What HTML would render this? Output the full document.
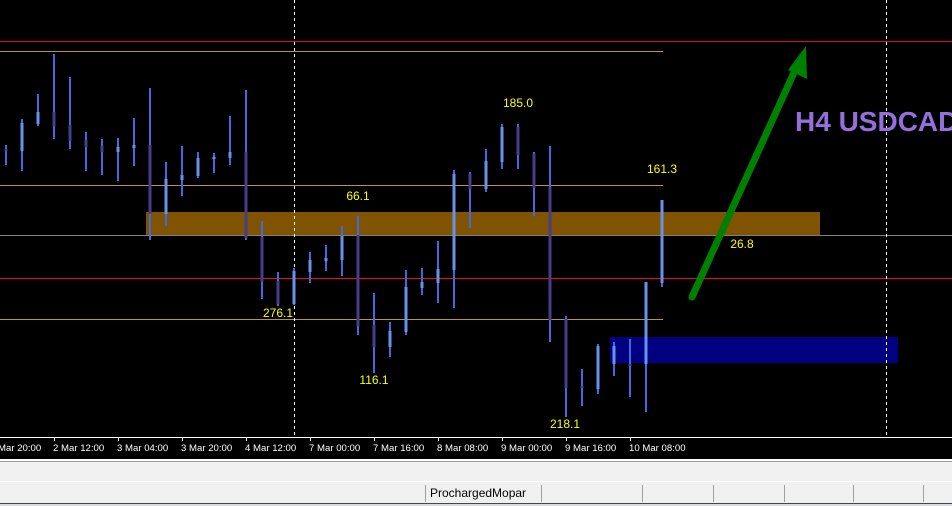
<!DOCTYPE html>
<html><head><meta charset="utf-8"><style>
html,body{margin:0;padding:0;width:952px;height:506px;overflow:hidden;background:#000;font-family:"Liberation Sans",sans-serif}
svg{display:block}
</style></head><body>
<svg width="952" height="506" viewBox="0 0 952 506" xmlns="http://www.w3.org/2000/svg">
<rect width="952" height="459" fill="#000"/>
<line x1="0" y1="41.5" x2="952" y2="41.5" stroke="#e01010" stroke-width="1"/>
<line x1="0" y1="51.5" x2="663" y2="51.5" stroke="#c09040" stroke-width="1"/>
<line x1="0" y1="185.5" x2="663" y2="185.5" stroke="#c09040" stroke-width="1"/>
<line x1="0" y1="319.5" x2="663" y2="319.5" stroke="#c09040" stroke-width="1"/>
<rect x="146" y="212" width="674" height="23" fill="#7f5300"/>
<line x1="0" y1="235.5" x2="952" y2="235.5" stroke="#808080" stroke-width="1"/>
<line x1="0" y1="278.5" x2="952" y2="278.5" stroke="#f01010" stroke-width="1"/>
<rect x="610" y="337" width="288" height="26" fill="#000080"/>
<line x1="294.5" y1="0" x2="294.5" y2="437" stroke="#fff" stroke-width="1" stroke-dasharray="3,3"/>
<line x1="886.5" y1="0" x2="886.5" y2="437" stroke="#fff" stroke-width="1" stroke-dasharray="3,3"/>
<g stroke-linecap="butt">
<g stroke="#4169e1" stroke-width="2">
<line x1="6" y1="145" x2="6" y2="165"/><line x1="22" y1="119" x2="22" y2="171"/><line x1="38" y1="94" x2="38" y2="126"/><line x1="54" y1="54" x2="54" y2="139"/><line x1="70" y1="77" x2="70" y2="149"/><line x1="86" y1="132" x2="86" y2="171"/><line x1="102" y1="139" x2="102" y2="175"/><line x1="118" y1="138" x2="118" y2="181"/><line x1="134" y1="118" x2="134" y2="166"/><line x1="150" y1="88" x2="150" y2="240"/><line x1="166" y1="162" x2="166" y2="226"/><line x1="182" y1="146" x2="182" y2="196"/><line x1="198" y1="152" x2="198" y2="178"/><line x1="214" y1="153" x2="214" y2="173"/><line x1="230" y1="116" x2="230" y2="165"/><line x1="246" y1="90" x2="246" y2="240"/><line x1="262" y1="221" x2="262" y2="299"/><line x1="278" y1="272" x2="278" y2="306"/><line x1="294" y1="268" x2="294" y2="305"/><line x1="310" y1="252" x2="310" y2="283"/><line x1="326" y1="245" x2="326" y2="271"/><line x1="342" y1="226" x2="342" y2="276"/><line x1="358" y1="216" x2="358" y2="335"/><line x1="374" y1="293" x2="374" y2="373"/><line x1="390" y1="322" x2="390" y2="357"/><line x1="406" y1="270" x2="406" y2="335"/><line x1="422" y1="268" x2="422" y2="295"/><line x1="438" y1="241" x2="438" y2="303"/><line x1="454" y1="170" x2="454" y2="308"/><line x1="470" y1="172" x2="470" y2="228"/><line x1="486" y1="149" x2="486" y2="192"/><line x1="502" y1="124" x2="502" y2="169"/><line x1="518" y1="124" x2="518" y2="169"/><line x1="534" y1="152" x2="534" y2="216"/><line x1="550" y1="146" x2="550" y2="342"/><line x1="566" y1="316" x2="566" y2="417"/><line x1="582" y1="369" x2="582" y2="406"/><line x1="598" y1="344" x2="598" y2="394"/><line x1="614" y1="342" x2="614" y2="376"/><line x1="630" y1="339" x2="630" y2="397"/><line x1="646" y1="282" x2="646" y2="412"/><line x1="662" y1="200" x2="662" y2="287"/>
</g>
<g stroke="#6495ed" stroke-width="3">
<line x1="22" y1="123" x2="22" y2="151"/><line x1="38" y1="112" x2="38" y2="124"/><line x1="118" y1="147" x2="118" y2="152"/><line x1="134" y1="145" x2="134" y2="148"/><line x1="166" y1="179" x2="166" y2="214"/><line x1="182" y1="175" x2="182" y2="180"/><line x1="198" y1="158" x2="198" y2="176"/><line x1="214" y1="157" x2="214" y2="159"/><line x1="230" y1="152" x2="230" y2="158"/><line x1="294" y1="271" x2="294" y2="304"/><line x1="310" y1="260" x2="310" y2="272"/><line x1="326" y1="258" x2="326" y2="261"/><line x1="342" y1="236" x2="342" y2="260"/><line x1="390" y1="331" x2="390" y2="347"/><line x1="406" y1="287" x2="406" y2="332"/><line x1="422" y1="282" x2="422" y2="288"/><line x1="438" y1="269" x2="438" y2="283"/><line x1="454" y1="174" x2="454" y2="270"/><line x1="486" y1="161" x2="486" y2="189"/><line x1="502" y1="127" x2="502" y2="162"/><line x1="598" y1="346" x2="598" y2="389"/><line x1="614" y1="346" x2="614" y2="364"/><line x1="646" y1="282" x2="646" y2="364"/><line x1="662" y1="200" x2="662" y2="283"/>
</g>
<g stroke="#483d8b" stroke-width="3">
<line x1="6" y1="149" x2="6" y2="151"/><line x1="54" y1="112" x2="54" y2="126"/><line x1="70" y1="125" x2="70" y2="141"/><line x1="86" y1="140" x2="86" y2="147"/><line x1="102" y1="146" x2="102" y2="152"/><line x1="150" y1="145" x2="150" y2="214"/><line x1="246" y1="152" x2="246" y2="238"/><line x1="262" y1="237" x2="262" y2="282"/><line x1="278" y1="281" x2="278" y2="304"/><line x1="358" y1="235" x2="358" y2="326"/><line x1="374" y1="325" x2="374" y2="347"/><line x1="470" y1="174" x2="470" y2="189"/><line x1="518" y1="127" x2="518" y2="155"/><line x1="534" y1="154" x2="534" y2="188"/><line x1="550" y1="187" x2="550" y2="320"/><line x1="566" y1="319" x2="566" y2="388"/><line x1="582" y1="386" x2="582" y2="388"/><line x1="630" y1="364" x2="630" y2="366"/>
</g>
</g>
<line x1="692" y1="297" x2="797" y2="66" stroke="#008000" stroke-width="7" stroke-linecap="round"/>
<polygon points="806,46 807,79 788,70" fill="#008000"/>
<g fill="#ffff00" font-size="12" text-anchor="middle">
<text x="518" y="107">185.0</text>
<text x="358" y="200">66.1</text>
<text x="662" y="173">161.3</text>
<text x="742" y="248">26.8</text>
<text x="278" y="317">276.1</text>
<text x="374" y="384">116.1</text>
<text x="565" y="428">218.1</text>
</g>
<text x="795" y="131" fill="#9370db" font-size="28" font-weight="bold">H4 USDCAD</text>
<line x1="0" y1="437.5" x2="952" y2="437.5" stroke="#fff" stroke-width="1"/>
<g stroke="#fff" stroke-width="1">
<line x1="54.5" y1="438" x2="54.5" y2="441"/><line x1="118.5" y1="438" x2="118.5" y2="441"/><line x1="182.5" y1="438" x2="182.5" y2="441"/><line x1="246.5" y1="438" x2="246.5" y2="441"/><line x1="310.5" y1="438" x2="310.5" y2="441"/><line x1="374.5" y1="438" x2="374.5" y2="441"/><line x1="438.5" y1="438" x2="438.5" y2="441"/><line x1="502.5" y1="438" x2="502.5" y2="441"/><line x1="566.5" y1="438" x2="566.5" y2="441"/><line x1="630.5" y1="438" x2="630.5" y2="441"/>
</g>
<g fill="#fff" font-size="9.6">
<text x="-10" y="451">1 Mar 20:00</text><text x="53" y="451">2 Mar 12:00</text><text x="117" y="451">3 Mar 04:00</text><text x="181" y="451">3 Mar 20:00</text><text x="245" y="451">4 Mar 12:00</text><text x="309" y="451">7 Mar 00:00</text><text x="373" y="451">7 Mar 16:00</text><text x="437" y="451">8 Mar 08:00</text><text x="501" y="451">9 Mar 00:00</text><text x="565" y="451">9 Mar 16:00</text><text x="629" y="451">10 Mar 08:00</text>
</g>
<rect x="0" y="459" width="952" height="47" fill="#f0f0f0"/>
<rect x="0" y="459" width="952" height="2" fill="#fff"/>
<rect x="0" y="461" width="952" height="1" fill="#a0a0a0"/>
<rect x="0" y="481" width="952" height="1" fill="#fff"/>
<rect x="0" y="503" width="952" height="1" fill="#404850"/>
<rect x="0" y="504" width="952" height="2" fill="#d8dce0"/>
<g fill="#a0a0a0">
<rect x="425" y="485" width="1" height="17"/><rect x="541" y="485" width="1" height="17"/><rect x="642" y="485" width="1" height="17"/><rect x="713" y="485" width="1" height="17"/><rect x="784" y="485" width="1" height="17"/><rect x="853" y="485" width="1" height="17"/><rect x="923" y="485" width="1" height="17"/>
</g>
<text x="430" y="497" fill="#000" font-size="12">ProchargedMopar</text>
</svg>
</body></html>
